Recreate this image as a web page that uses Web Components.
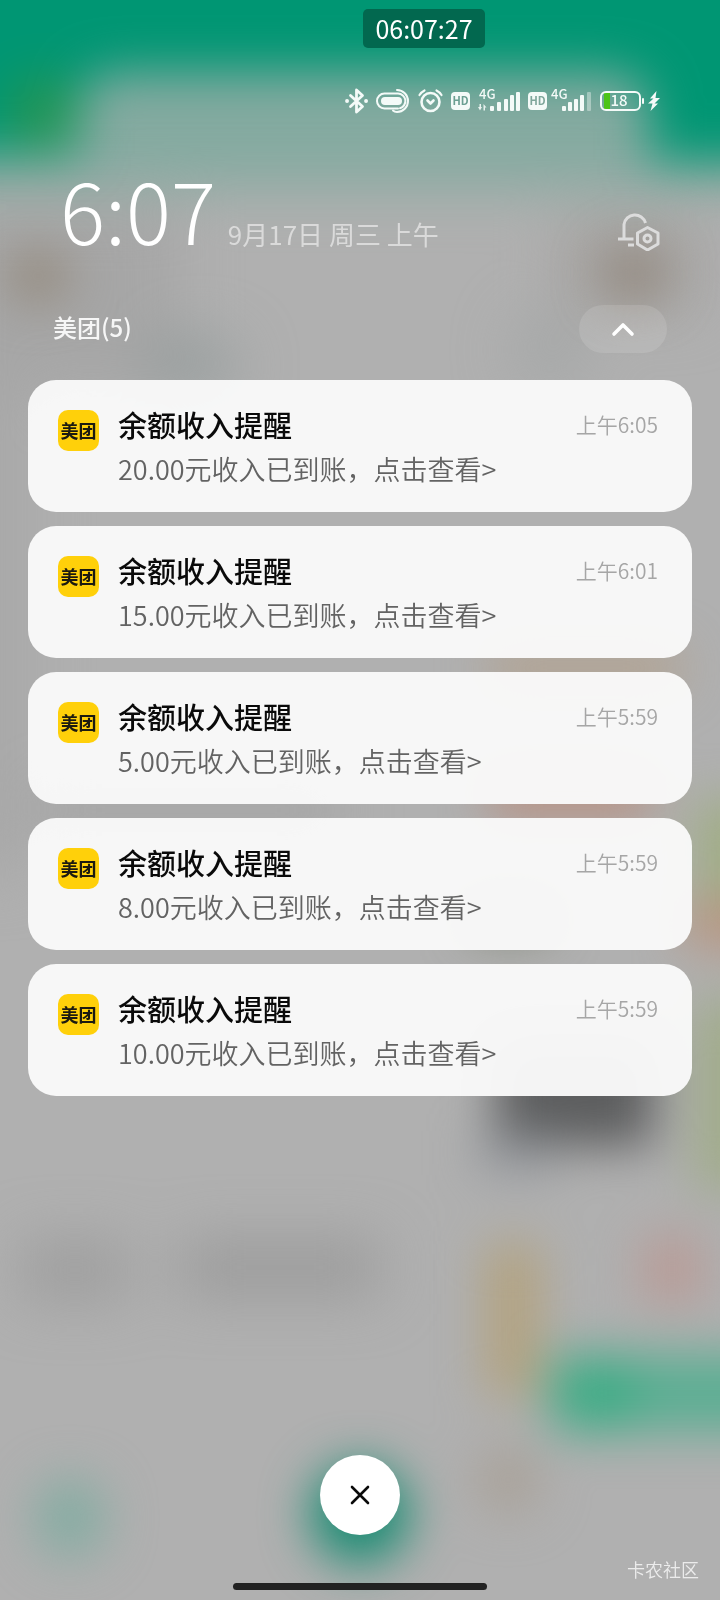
<!DOCTYPE html>
<html lang="zh-CN">
<head>
<meta charset="utf-8">
<meta name="viewport" content="width=device-width, initial-scale=1">
<title>通知中心</title>
<style>
  body { margin: 0; background: #b0b0b0; font-family: "Noto Sans CJK SC", sans-serif; }
</style>
</head>
<body>
<notification-shade>
  <time-chip slot="chip">06:07:27</time-chip>
  <status-bar slot="status"></status-bar>
  <shade-header slot="header" time="6:07">9月17日 周三 上午</shade-header>
  <notification-group label="美团(5)">
    <notification-card time="上午6:05"><span slot="title">余额收入提醒</span>20.00元收入已到账，点击查看&gt;</notification-card>
    <notification-card time="上午6:01"><span slot="title">余额收入提醒</span>15.00元收入已到账，点击查看&gt;</notification-card>
    <notification-card time="上午5:59"><span slot="title">余额收入提醒</span>5.00元收入已到账，点击查看&gt;</notification-card>
    <notification-card time="上午5:59"><span slot="title">余额收入提醒</span>8.00元收入已到账，点击查看&gt;</notification-card>
    <notification-card time="上午5:59"><span slot="title">余额收入提醒</span>10.00元收入已到账，点击查看&gt;</notification-card>
  </notification-group>
  <clear-button slot="footer"></clear-button>
  <home-bar slot="footer"></home-bar>
  <water-mark slot="mark">卡农社区</water-mark>
</notification-shade>

<script>
const define = (name, html, setup) => {
  const template = document.createElement('template');
  template.innerHTML = html;
  customElements.define(name, class extends HTMLElement {
    constructor() {
      super();
      this.attachShadow({ mode: 'open' }).append(template.content.cloneNode(true));
    }
    connectedCallback() {
      if (setup) setup(this, this.shadowRoot);
    }
  });
};

define('blurred-wallpaper', `
<style>
  :host { display: block; position: absolute; inset: 0; overflow: hidden; }
  svg { display: block; width: 100%; height: 100%; }
</style>
<svg viewBox="0 0 720 1600" preserveAspectRatio="none" aria-hidden="true">
  <defs>
    <filter id="soft" filterUnits="userSpaceOnUse" x="-160" y="-160" width="1040" height="1920" color-interpolation-filters="sRGB"><feGaussianBlur stdDeviation="24"/></filter>
    <filter id="wide" filterUnits="userSpaceOnUse" x="-160" y="-160" width="1040" height="1920" color-interpolation-filters="sRGB"><feGaussianBlur stdDeviation="28"/></filter>
  </defs>
  <rect width="720" height="1600" fill="#b0b0b0"/>
  <g filter="url(#wide)">
    <rect x="-160" y="-160" width="1040" height="346" fill="#84aaa0"/>
    <rect x="-60" y="205" width="240" height="190" fill="#a4a4a4" opacity=".8"/>
    <rect x="-60" y="395" width="90" height="480" fill="#a8a8a8"/>
    <rect x="560" y="220" width="140" height="90" fill="#a6a4a2"/>
    <ellipse cx="190" cy="365" rx="50" ry="30" fill="#949b9b" opacity=".8"/>
    <ellipse cx="550" cy="350" rx="40" ry="40" fill="#a3a5a5" opacity=".7"/>
    <rect x="40" y="790" width="300" height="40" fill="#999" opacity=".6"/>
    <rect x="20" y="1240" width="110" height="60" fill="#9a9a9a" opacity=".8"/>
    <rect x="180" y="1240" width="200" height="55" fill="#969696" opacity=".8"/>
  </g>
  <g filter="url(#soft)">
    <path d="M-160-160H880V160H650V110Q646 72 606 72H114Q78 72 78 124V154H-160Z" fill="#009673"/>
    <ellipse cx="42" cy="112" rx="34" ry="36" fill="#259553"/>
    <ellipse cx="38" cy="276" rx="32" ry="26" fill="#948a7d"/>
    <ellipse cx="634" cy="274" rx="32" ry="28" fill="#93897f"/>
    <rect x="490" y="650" width="190" height="36" fill="#b29f8a"/>
    <rect x="490" y="776" width="160" height="36" fill="#ba8774"/>
    <rect x="694" y="800" width="100" height="100" fill="#a1ad86"/>
    <rect x="684" y="902" width="100" height="46" fill="#b9957f"/>
    <rect x="694" y="1000" width="100" height="190" fill="#a1ac8b"/>
    <rect x="470" y="906" width="80" height="28" fill="#757b68"/>
    <rect x="496" y="1040" width="158" height="106" fill="#5c5d5e"/>
    <rect x="476" y="1130" width="80" height="46" fill="#8c9197" opacity=".6"/>
    <rect x="486" y="1244" width="54" height="152" fill="#b3a27e"/>
    <rect x="642" y="1236" width="60" height="66" fill="#b99b96"/>
    <rect x="550" y="1354" width="320" height="78" fill="#5cae93"/>
    <ellipse cx="596" cy="1394" rx="42" ry="36" fill="#3cac85"/>
    <ellipse cx="70" cy="1518" rx="36" ry="40" fill="#84aca2"/>
    <ellipse cx="508" cy="1480" rx="32" ry="34" fill="#a9a198"/>
    <ellipse cx="360" cy="1514" rx="50" ry="50" fill="#1a8c73"/>
  </g>
</svg>`);

define('notification-shade', `
<style>
  :host { display: block; position: relative; min-height: 100vh; }
  main { position: relative; display: flex; flex-direction: column; min-height: 100vh; }
  footer { margin-top: auto; padding: 48px 0 10px; display: flex; flex-direction: column; align-items: center; gap: 48px; }
</style>
<blurred-wallpaper></blurred-wallpaper>
<main>
  <slot name="status"></slot>
  <slot name="header"></slot>
  <slot></slot>
  <footer><slot name="footer"></slot></footer>
</main>
<slot name="chip"></slot>
<slot name="mark"></slot>`);

define('time-chip', `
<style>
  :host { position: absolute; top: 9px; left: 363px; box-sizing: border-box; width: 122px; height: 39px;
    display: flex; align-items: center; justify-content: center; border-radius: 5px;
    background: #02684f; color: #fff; font-size: 25px; line-height: 39px; font-weight: 400; }
</style>
<slot></slot>`);

define('status-bar', `
<style>
  :host { display: flex; justify-content: flex-end; align-items: center; gap: 8px; height: 26px;
    padding: 88px 60px 0; color: #f4faf8; }
  svg { display: block; flex: none; overflow: visible; }
  text { font-family: "Noto Sans CJK SC", sans-serif; fill: currentColor; }
  .pair { display: flex; align-items: center; gap: 4px; }
</style>
<svg width="24" height="26" viewBox="0 0 24 26" fill="none" stroke="currentColor" stroke-width="2.800" stroke-linejoin="round" stroke-linecap="round" role="img" aria-label="蓝牙">
  <path d="M6.500 7.500L18.500 18.500L12.500 24V2L18.500 7.500L6.500 18.500"/>
  <path d="M3 13h.1M22 13h.1" stroke-width="3.800"/>
</svg>
<svg width="34" height="26" viewBox="0 0 34 26" fill="none" stroke="currentColor" stroke-width="2" stroke-linecap="round" role="img" aria-label="勿扰">
  <rect x="5" y="9" width="21" height="8" rx="4" fill="currentColor" stroke="none"/>
  <path d="M22 20.500H8.500a7 7 0 0 1 0-15H22a7.500 7.500 0 0 1 2 14.700"/>
  <path d="M21 2a11 11 0 1 1 0 22q-2.500 0-4-1.500"/>
</svg>
<svg width="25" height="26" viewBox="0 0 25 26" fill="none" stroke="currentColor" stroke-width="2.600" stroke-linecap="round" stroke-linejoin="round" role="img" aria-label="闹钟">
  <circle cx="12.500" cy="14" r="9"/>
  <path d="M9.500 12.500l3 3L15.500 12.500"/>
  <path d="M1.500 7Q3.500 4 6.500 2.500M23.500 7Q21.500 4 18.500 2.500" stroke-width="2.200"/>
</svg>
<svg width="19" height="26" viewBox="0 0 19 26" role="img" aria-label="HD">
  <rect y="4" width="19" height="18" rx="4" fill="currentColor"/>
  <text x="9.500" y="17" font-size="11" font-weight="700" text-anchor="middle" style="fill:#6b9f92">HD</text>
</svg>
<svg width="42" height="26" viewBox="0 0 42 26" fill="currentColor" role="img" aria-label="4G">
  <text x="1" y="11" font-size="13" font-weight="500">4G</text>
  <path d="M1.500 16h1.500v3h1l-2 3.500L0 19h1.500zM5.500 22.500V16l3 3.500H7v3z" opacity=".9"/>
  <rect x="12" y="18" width="4" height="5" rx="1"/><rect x="19" y="14" width="4" height="9" rx="1"/>
  <rect x="26" y="11" width="4" height="12" rx="1"/><rect x="32" y="7" width="4" height="16" rx="1"/>
  <rect x="38" y="4" width="4" height="19" rx="1"/>
</svg>
<span class="pair">
<svg width="19" height="26" viewBox="0 0 19 26" role="img" aria-label="HD">
  <rect y="4" width="19" height="18" rx="4" fill="currentColor"/>
  <text x="9.500" y="17" font-size="11" font-weight="700" text-anchor="middle" style="fill:#7fa69b">HD</text>
</svg>
<svg width="41" height="26" viewBox="0 0 41 26" fill="currentColor" role="img" aria-label="4G">
  <text x="0" y="11" font-size="13" font-weight="500">4G</text>
  <rect x="11" y="18" width="4" height="5" rx="1"/><rect x="17" y="14" width="4" height="9" rx="1"/>
  <rect x="23" y="11" width="4" height="12" rx="1"/><rect x="29" y="7" width="4" height="16" rx="1"/>
  <rect x="36" y="4" width="4" height="19" rx="1" opacity=".4"/>
</svg>
</span>
<span class="pair">
<svg width="44" height="26" viewBox="0 0 44 26" role="img" aria-label="电量 18%">
  <rect x="4" y="5" width="6" height="16" fill="#4cc417"/>
  <rect x="1" y="4" width="39" height="18" rx="5" fill="none" stroke="currentColor" stroke-width="2"/>
  <rect x="42" y="10" width="2" height="6" rx="1" fill="currentColor"/>
  <text x="19" y="18" font-size="15" font-weight="500" text-anchor="middle">18</text>
</svg>
<svg width="12" height="26" viewBox="0 0 12 26" fill="currentColor" role="img" aria-label="充电中">
  <path d="M8.500 3L2 10.500H5.500L0 15.500H4.500L2.500 23L10 15.500H6.500L12 10H7.500Z"/>
</svg>
</span>`);

define('shade-header', `
<style>
  :host { display: flex; align-items: baseline; gap: 12px; padding: 53px 60px 0; }
  time { font-size: 84px; line-height: 84px; font-weight: 300; color: #fff; }
  .date { font-size: 26px; line-height: 26px; font-weight: 400; color: #dadada; }
  button { align-self: flex-end; margin-left: auto; padding: 0; border: 0; background: none; color: #dcdcdc; width: 42px; height: 40px; }
  svg { display: block; }
</style>
<time></time><span class="date"><slot></slot></span>
<button aria-label="通知设置">
  <svg width="42" height="40" viewBox="0 0 42 40" fill="none" stroke="currentColor" stroke-width="3">
    <path d="M6 28V13.500a11 11 0 0 1 21.500-1.500M0 28h15.500M10 34h6"/>
    <path d="M29.500 16.500L40 22V33L29.500 39L19.500 33V22Z" stroke-linejoin="round"/>
    <circle cx="29.500" cy="27.500" r="3.500"/>
  </svg>
</button>`, (host, root) => { root.querySelector('time').textContent = host.getAttribute('time'); });

define('notification-group', `
<style>
  :host { display: block; padding: 54px 28px 0; }
  header { display: flex; align-items: center; justify-content: space-between; padding: 0 25px; height: 48px; margin-bottom: 27px; }
  h2 { margin: 0 0 4px; font-size: 24px; line-height: 36px; font-weight: 500; color: #f6f6f6; }
  button { display: grid; place-items: center; width: 88px; height: 48px; padding: 0; border: 0; border-radius: 24px;
    background: rgba(255, 255, 255, .12); color: #fff; }
  .list { display: flex; flex-direction: column; gap: 14px; }
</style>
<section>
  <header><h2></h2>
    <button aria-label="收起">
      <svg width="24" height="16" viewBox="0 0 24 16" fill="none" stroke="currentColor" stroke-width="3.600" stroke-linecap="round" stroke-linejoin="round"><path d="M3 13L12 4L21 13"/></svg>
    </button>
  </header>
  <div class="list"><slot></slot></div>
</section>`, (host, root) => { root.querySelector('h2').textContent = host.getAttribute('label'); });

define('app-icon', `
<style>
  :host { display: grid; place-items: center; flex: none; width: 41px; height: 41px; border-radius: 10px;
    background: #ffd00a; color: #1c1a10; font-size: 18px; line-height: 24px; font-weight: 700; white-space: nowrap; }
  span { padding-bottom: 2px; }
</style>
<span>美团</span>`);

define('notification-card', `
<style>
  :host { display: block; }
  article { display: flex; padding: 22px 34px 20px 30px; border-radius: 28px; background: rgba(249, 249, 249, .97); }
  app-icon { margin: 8px 19px 0 0; }
  .text { flex: 1; min-width: 0; }
  h3, p, time { margin: 0; line-height: 44px; }
  h3 { font-size: 29px; font-weight: 500; color: #0a0a0a; }
  p { font-size: 27px; line-height: 46px; font-weight: 350; color: #636363; white-space: nowrap; }
  time { font-size: 21px; font-weight: 350; color: #a6a6a6; }
</style>
<article>
  <app-icon></app-icon>
  <div class="text"><h3><slot name="title"></slot></h3><p><slot></slot></p></div>
  <time></time>
</article>`, (host, root) => { root.querySelector('time').textContent = host.getAttribute('time'); });

define('clear-button', `
<style>
  :host { display: block; }
  button { display: grid; place-items: center; width: 80px; height: 80px; padding: 0; border: 0; border-radius: 50%; background: #fff; color: #0a0a0a; }
</style>
<button aria-label="清除全部通知">
  <svg width="20" height="20" viewBox="0 0 20 20" stroke="currentColor" stroke-width="2.600" stroke-linecap="round"><path d="M2 2L18 18M18 2L2 18"/></svg>
</button>`);

define('home-bar', `
<style>
  :host { display: block; width: 254px; height: 7px; border-radius: 4px; background: #222; }
</style>`);

define('water-mark', `
<style>
  :host { display: block; position: absolute; right: 21px; bottom: 18px; font-size: 18px; line-height: 26px; font-weight: 350; color: #ececec; }
</style>
<slot></slot>`);
</script>
</body>
</html>
